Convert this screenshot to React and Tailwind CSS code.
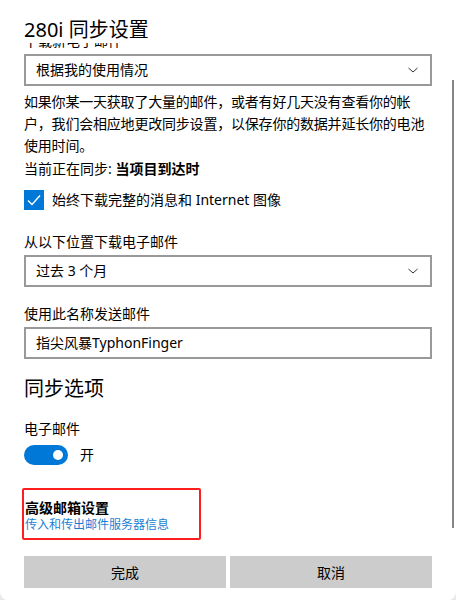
import React from "react";

const font = {fontFamily: '"Noto Sans", "Noto Sans CJK SC", sans-serif'};

function Chevron() {
    return (
        <svg width="12" height="8" viewBox="0 0 12 8" className="text-[#333]">
            <path d="M1.5 2 L6 6 L10.5 2" fill="none" stroke="currentColor" strokeWidth="1"/>
        </svg>
    );
}

function Select({value}) {
    return (
        <div className="h-8 border-2 border-[#999] flex items-center justify-between pl-[10px] pr-[11px]">
            <span className="text-[14px] leading-5">{value}</span>
            <Chevron/>
        </div>
    );
}

export default function App() {
    return (
        <div style={font} className="w-[456px] h-[600px] bg-[#e8e8e8]">
            <div className="relative w-[456px] h-[600px] bg-white rounded-b-[8px] flex flex-col text-black">
                <div className="relative z-10 bg-white px-6 pt-[17px] h-[43px]">
                    <h1 className="text-[20px] leading-[26px] font-normal">280i 同步设置</h1>
                </div>

                {/* scrolled content, first label sits under the title */}
                <div className="h-[500px] overflow-hidden pl-6 pr-6">
                    <div className="-mt-[12px] flex flex-col">
                        <div className="text-[14px] leading-5 h-5">下载新电子邮件</div>
                        <div className="mt-[3px]"><Select value="根据我的使用情况"/></div>

                        <p className="mt-[5px] text-[14px] leading-[22px] tracking-[-0.2px]">
                            如果你某一天获取了大量的邮件，或者有好几天没有查看你的帐户，我们会相应地更改同步设置，以保存你的数据并延长你的电池使用时间。
                        </p>

                        <div className="mt-[2px] text-[14px] leading-5">
                            当前正在同步: <span className="font-bold">当项目到达时</span>
                        </div>

                        <div className="mt-[11px] flex items-center gap-2">
                            <div className="w-5 h-5 bg-[#0078d7] flex items-center justify-center">
                                <svg width="14" height="12" viewBox="0 0 14 12">
                                    <path d="M1 6.5 L5 10.5 L13 1.5" fill="none" stroke="white" strokeWidth="1.4"/>
                                </svg>
                            </div>
                            <span className="text-[14px] leading-5">始终下载完整的消息和 Internet 图像</span>
                        </div>

                        <div className="mt-[22px] text-[14px] leading-5">从以下位置下载电子邮件</div>
                        <div className="mt-[3px]"><Select value="过去 3 个月"/></div>

                        <div className="mt-[17px] text-[14px] leading-5">使用此名称发送邮件</div>
                        <div className="mt-[3px] h-8 border-2 border-[#999] flex items-center pl-[10px]">
                            <span className="text-[14px] leading-5">指尖风暴TyphonFinger</span>
                        </div>

                        <div className="mt-[17px] text-[20px] leading-[26px]">同步选项</div>

                        <div className="mt-[17px] text-[14px] leading-5">电子邮件</div>
                        <div className="mt-[6px] flex items-center gap-3">
                            <div className="w-11 h-5 rounded-full bg-[#0078d7] flex items-center justify-end pr-[5px]">
                                <div className="w-[10px] h-[10px] rounded-full bg-white"></div>
                            </div>
                            <span className="text-[14px] leading-5">开</span>
                        </div>

                        <div className="mt-[23px] -ml-[2px] w-[179px] h-[52px] border-2 border-[#ff1e1e] rounded-[2px] pl-[1px] pt-[9px]">
                            <div className="text-[14px] leading-[18px] font-bold">高级邮箱设置</div>
                            <div className="text-[12px] leading-4 text-[#1a7fd4]">传入和传出邮件服务器信息</div>
                        </div>
                    </div>
                </div>

                <div className="px-6 pt-[13px] flex gap-1">
                    <button className="flex-1 h-8 bg-[#cccccc] text-[14px]">完成</button>
                    <button className="flex-1 h-8 bg-[#cccccc] text-[14px]">取消</button>
                </div>

                <div className="absolute right-[2px] top-[80px] w-[2px] h-[448px] bg-[#858585]"></div>
            </div>
        </div>
    );
}
